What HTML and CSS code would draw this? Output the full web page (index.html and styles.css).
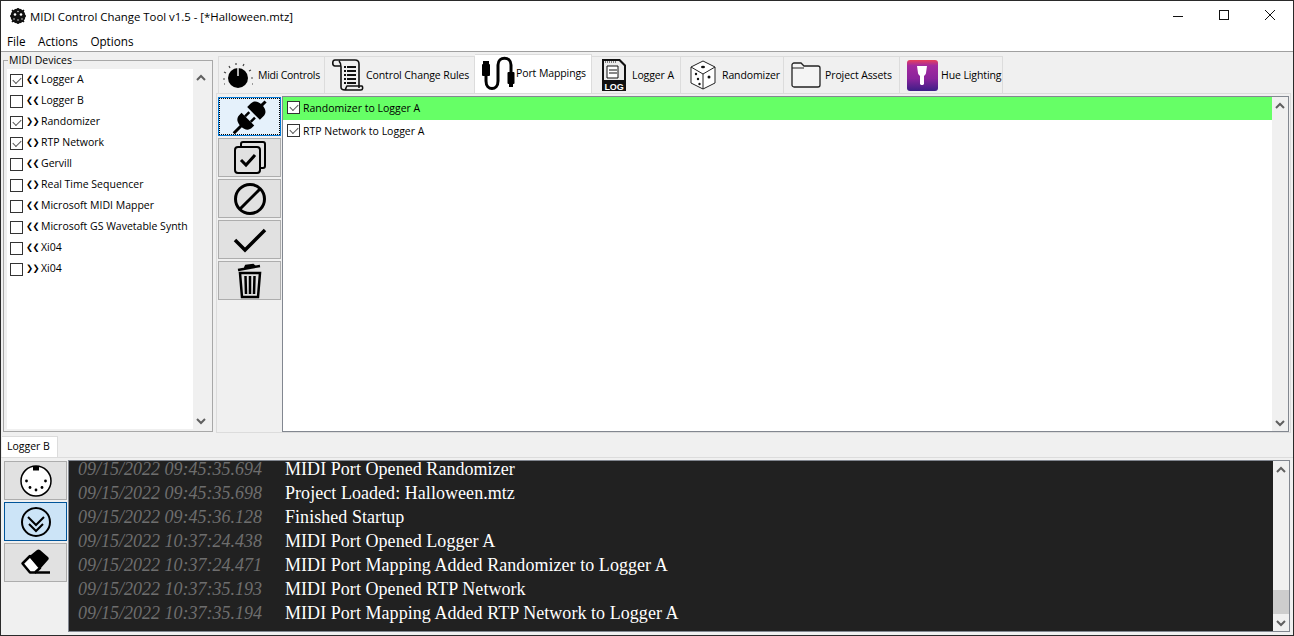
FILE: index.html
```html
<!DOCTYPE html>
<html lang="en">
<head>
<meta charset="utf-8">
<title>MIDI Control Change Tool</title>
<link rel="stylesheet" href="styles.css">
</head>
<body>
<div class="window">
  <header class="titlebar">
    <svg class="app-icon" width="18" height="18" viewBox="0 0 18 18"><circle cx="9" cy="9" r="7.5" fill="#111"/><path d="M1 9h16M9 1v16M3 3l12 12M15 3L3 15" stroke="#111" stroke-width="1.6"/><g fill="#fff"><circle cx="6" cy="7.5" r="1.3"/><circle cx="12" cy="7.5" r="1.3"/><circle cx="9" cy="4.5" r=".7"/><circle cx="5" cy="12" r=".7"/><circle cx="9" cy="13" r=".7"/><circle cx="13" cy="12" r=".7"/></g></svg>
    <span class="title-text">MIDI Control Change Tool v1.5 - [*Halloween.mtz]</span>
    <div class="window-controls">
      <svg width="46" height="30" viewBox="0 0 46 30"><path d="M18 15.5h10" stroke="#111"/></svg>
      <svg width="46" height="30" viewBox="0 0 46 30"><rect x="18.5" y="9.5" width="9" height="9" fill="none" stroke="#111"/></svg>
      <svg width="46" height="30" viewBox="0 0 46 30"><path d="M18 9l10 10M28 9L18 19" stroke="#111"/></svg>
    </div>
  </header>
  <nav class="menubar"><span>File</span><span>Actions</span><span>Options</span></nav>

  <main class="upper">
    <fieldset class="devices">
      <legend>MIDI Devices</legend>
      <div class="devices-inner">
        <ul class="device-list">
          <li><i class="check on"></i><b class="dir">&#10094;&#10094;</b>Logger A</li>
          <li><i class="check"></i><b class="dir">&#10094;&#10094;</b>Logger B</li>
          <li><i class="check on"></i><b class="dir">&#10095;&#10095;</b>Randomizer</li>
          <li><i class="check on"></i><b class="dir">&#10094;&#10095;</b>RTP Network</li>
          <li><i class="check"></i><b class="dir">&#10094;&#10094;</b>Gervill</li>
          <li><i class="check"></i><b class="dir">&#10094;&#10095;</b>Real Time Sequencer</li>
          <li><i class="check"></i><b class="dir">&#10094;&#10094;</b>Microsoft MIDI Mapper</li>
          <li><i class="check"></i><b class="dir">&#10094;&#10094;</b>Microsoft GS Wavetable Synth</li>
          <li><i class="check"></i><b class="dir">&#10094;&#10094;</b>Xi04</li>
          <li><i class="check"></i><b class="dir">&#10095;&#10095;</b>Xi04</li>
        </ul>
        <div class="scrollbar">
          <svg class="arrow" width="16" height="17" viewBox="0 0 16 17"><path d="M4 11l4-4 4 4" fill="none" stroke="#606060" stroke-width="2"/></svg>
          <div class="track"></div>
          <svg class="arrow" width="16" height="17" viewBox="0 0 16 17"><path d="M4 7l4 4 4-4" fill="none" stroke="#606060" stroke-width="2"/></svg>
        </div>
      </div>
    </fieldset>

    <section class="workspace">
      <div class="tabs">
        <div class="tab t-midi">
          <svg width="36" height="30" viewBox="0 0 36 30"><circle cx="17" cy="18" r="10" fill="#000"/><path d="M17 8v8" stroke="#fff" stroke-width="1.4"/><g stroke="#444" stroke-width="1.2" fill="none"><path d="M2 19h2M3 12l2 1M8 6l1 2M15 3v2M23 4l-1 2M30 10l-2 1M32 18h-2M3 24h1M32 24h-1"/></g></svg>
          <span>Midi Controls</span>
        </div>
        <div class="tab t-rules">
          <svg width="34" height="34" viewBox="0 0 34 34"><path d="M4 2h20c3 0 4 2 4 4v24M4 2C1 2 1 8 4 8h6M8 3c2 2 2 4 2 6v20c0 2 2 3 4 3h16c2 0 2-3 1-4H16c-1 1-1 3-2 4" fill="none" stroke="#111" stroke-width="1.6"/><path d="M13 9h12M13 13h12M13 17h12M13 21h12M13 25h12" stroke="#111" stroke-width="2" stroke-dasharray="2 1 9 0"/></svg>
          <span>Control Change Rules</span>
        </div>
        <div class="tab t-ports active">
          <svg width="36" height="36" viewBox="0 0 36 36"><path d="M7 17v9c0 10 12 10 12 0V10c0-9 13-9 13 0v12" fill="none" stroke="#000" stroke-width="3"/><rect x="4" y="6" width="6" height="3" fill="#000"/><rect x="3" y="9" width="8" height="12" rx="1" fill="#000"/><rect x="28.500" y="17" width="7" height="12" rx="1" fill="#000"/><rect x="30" y="29" width="4" height="3" fill="#000"/></svg>
          <span>Port Mappings</span>
        </div>
        <div class="tab t-logger">
          <svg width="26" height="34" viewBox="0 0 26 34"><path d="M2 1h17l6 6v26H1V1z" fill="#111"/><path d="M3 3h15l5 5v14H3z" fill="#ececec"/><path d="M6 8h11v12H6z" fill="#fff" stroke="#111"/><path d="M8 12h8M8 15h8" stroke="#111"/><path d="M4 4h12" stroke="#111" stroke-dasharray="1 1"/><text x="13" y="31.500" class="log-text" text-anchor="middle">LOG</text></svg>
          <span>Logger A</span>
        </div>
        <div class="tab t-random">
          <svg width="26" height="30" viewBox="0 0 26 30"><path d="M13 1l12 6v16l-12 6-12-6V7z" fill="#fff" stroke="#222"/><path d="M1 7l12 7 12-7M13 14v15" fill="none" stroke="#222"/><g fill="#111"><ellipse cx="13" cy="7" rx="2" ry="1.300"/><circle cx="6" cy="14" r="1.200"/><circle cx="8" cy="19" r="1.200"/><circle cx="9.500" cy="24" r="1.200"/><circle cx="19" cy="17" r="1.500"/></g></svg>
          <span>Randomizer</span>
        </div>
        <div class="tab t-assets">
          <svg width="30" height="26" viewBox="0 0 30 26"><path d="M1 3c0-1 1-2 2-2h7l3 3h14c1 0 2 1 2 2v17c0 1-1 2-2 2H3c-1 0-2-1-2-2z" fill="#f4f4f4" stroke="#222" stroke-width="1.300"/><path d="M1 6h12" stroke="#222"/></svg>
          <span>Project Assets</span>
        </div>
        <div class="tab t-hue">
          <svg width="31" height="31" viewBox="0 0 31 31"><defs><linearGradient id="hue" x1="0" y1="0" x2="0" y2="1"><stop offset="0" stop-color="#e8405a"/><stop offset=".18" stop-color="#a42a9e"/><stop offset=".6" stop-color="#8a249c"/><stop offset="1" stop-color="#3c1e86"/></linearGradient></defs><rect width="31" height="31" rx="3" fill="url(#hue)"/><path d="M10 6h10l-1 7c0 1-1 2-2 3v8l-1 1h-2l-1-1v-8c-1-1-2-2-2-3z" fill="#fff"/></svg>
          <span>Hue Lighting</span>
        </div>
      </div>
      <div class="tab-pane">
        <div class="toolbar">
          <button class="tool focused"><svg class="bleed" width="36" height="36" viewBox="0 0 36 36"><g transform="rotate(45 18 18)" fill="#000" stroke="#000" stroke-width="0"><path d="M18 -4v7" stroke-width="3"/><path d="M9 13h18V8c0-5-4-7-9-7s-9 2-9 7z"/><path d="M9 21h18v3c0 5-4 7-9 7s-9-2-9-7z"/><path d="M14 21v-6M22 21v-6" stroke-width="2.500"/><path d="M18 30v11" stroke-width="3"/></g></svg></button>
          <button class="tool"><svg width="34" height="34" viewBox="0 0 34 34"><path d="M8 5V3c0-1 1-2 2-2h20c1 0 2 1 2 2v22c0 1-1 2-2 2h-2" fill="none" stroke="#000" stroke-width="2"/><rect x="2" y="6" width="25" height="26" rx="3" fill="none" stroke="#000" stroke-width="2"/><path d="M8 19l5 5 9-10" fill="none" stroke="#000" stroke-width="3"/></svg></button>
          <button class="tool"><svg width="34" height="34" viewBox="0 0 34 34"><circle cx="17" cy="17" r="14.500" fill="none" stroke="#000" stroke-width="3"/><path d="M7 27L27 7" stroke="#000" stroke-width="3"/></svg></button>
          <button class="tool"><svg width="34" height="26" viewBox="0 0 34 26"><path d="M2 13l10 10L32 3" fill="none" stroke="#000" stroke-width="3.500"/></svg></button>
          <button class="tool"><svg width="26" height="36" viewBox="0 0 26 36"><path d="M1 7l22-4M8 5l1-2 7-1 2 2" fill="none" stroke="#000" stroke-width="2.500"/><path d="M3 10h20l-2 24H5z" fill="none" stroke="#000" stroke-width="2.500"/><path d="M8.500 13l.5 18M13 13v18M17.500 13l-.5 18" stroke="#000" stroke-width="2.500"/></svg></button>
        </div>
        <div class="mappings">
          <ul class="mapping-list">
            <li class="selected"><i class="check on"></i>Randomizer to Logger A</li>
            <li><i class="check on"></i>RTP Network to Logger A</li>
          </ul>
          <div class="scrollbar">
            <svg class="arrow" width="16" height="17" viewBox="0 0 16 17"><path d="M4 11l4-4 4 4" fill="none" stroke="#606060" stroke-width="2"/></svg>
            <div class="track"></div>
            <svg class="arrow" width="16" height="17" viewBox="0 0 16 17"><path d="M4 7l4 4 4-4" fill="none" stroke="#606060" stroke-width="2"/></svg>
          </div>
        </div>
      </div>
    </section>
  </main>

  <section class="lower">
    <div class="log-tabs"><div class="log-tab">Logger B</div></div>
    <div class="log-pane">
      <div class="log-tools">
        <button class="tool"><svg width="32" height="32" viewBox="0 0 32 32"><circle cx="16" cy="16" r="15" fill="#fff" stroke="#000" stroke-width="1.500"/><rect x="13" y="1" width="6" height="4.500" fill="#000"/><g fill="#000"><circle cx="6.500" cy="16" r="1.400"/><circle cx="25.500" cy="16" r="1.400"/><circle cx="10" cy="22.500" r="1.400"/><circle cx="22" cy="22.500" r="1.400"/><circle cx="16" cy="25" r="1.400"/></g></svg></button>
        <button class="tool toggled"><svg width="32" height="32" viewBox="0 0 32 32"><circle cx="16" cy="16" r="14" fill="none" stroke="#000" stroke-width="2"/><path d="M8 11l8 8 8-8M9 18l7 7 7-7" fill="none" stroke="#000" stroke-width="2"/></svg></button>
        <button class="tool"><svg width="32" height="28" viewBox="0 0 32 28"><path d="M10 7L2.500 14.500 10 23.500h5L20 19z" fill="#fff" stroke="#000" stroke-width="2.500" stroke-linejoin="round"/><path d="M9 7.500L17 1c1-.7 2-.7 3 0l8 7c1 1 1 2 0 3l-7.500 8.500z" fill="#000"/><path d="M15 23.500h15" stroke="#000" stroke-width="2.500"/></svg></button>
      </div>
      <div class="log-box">
        <div class="log-lines">
          <div class="line"><time>09/15/2022 09:45:35.694</time><span>MIDI Port Opened Randomizer</span></div>
          <div class="line"><time>09/15/2022 09:45:35.698</time><span>Project Loaded: Halloween.mtz</span></div>
          <div class="line"><time>09/15/2022 09:45:36.128</time><span>Finished Startup</span></div>
          <div class="line"><time>09/15/2022 10:37:24.438</time><span>MIDI Port Opened Logger A</span></div>
          <div class="line"><time>09/15/2022 10:37:24.471</time><span>MIDI Port Mapping Added Randomizer to Logger A</span></div>
          <div class="line"><time>09/15/2022 10:37:35.193</time><span>MIDI Port Opened RTP Network</span></div>
          <div class="line"><time>09/15/2022 10:37:35.194</time><span>MIDI Port Mapping Added RTP Network to Logger A</span></div>
        </div>
        <div class="scrollbar">
          <svg class="arrow" width="16" height="17" viewBox="0 0 16 17"><path d="M4 11l4-4 4 4" fill="none" stroke="#606060" stroke-width="2"/></svg>
          <div class="track end"><div class="thumb"></div></div>
          <svg class="arrow" width="16" height="17" viewBox="0 0 16 17"><path d="M4 7l4 4 4-4" fill="none" stroke="#606060" stroke-width="2"/></svg>
        </div>
      </div>
    </div>
  </section>
</div>
</body>
</html>
```
FILE: styles.css
```css
* { box-sizing: border-box; }
html, body { margin: 0; padding: 0; height: 100%; overflow: hidden; }
body { font-family: "Open Sans", "Noto Sans", sans-serif; font-size: 10.5px; color: #000; background: #f0f0f0; }
ul { list-style: none; margin: 0; padding: 0; }

.window { width: 1294px; height: 636px; border: 1px solid #2a2a2a; display: flex; flex-direction: column; background: #f0f0f0; }

.titlebar { height: 30px; background: #fff; display: flex; align-items: center; padding-left: 8px; flex: none; }
.app-icon { margin-right: 3px; }
.title-text { font-size: 11.4px; }
.window-controls { margin-left: auto; display: flex; }
.window-controls svg { display: block; }

.menubar { height: 21px; background: #fff; border-bottom: 1px solid #a0a0a0; display: flex; gap: 12.5px; padding: 2px 0 0 6px; font-size: 11.7px; flex: none; }

.upper { flex: none; height: 382px; display: flex; padding: 1px 0 0 2px; }

.devices { width: 210px; height: 378px; margin: 1px 0 0 0; padding: 0 3px 2px 3px; border: 1px solid #a8a8a8; min-width: 0; }
.devices legend { padding: 0 1px; margin-left: 1px; line-height: 13px; }
.devices-inner { display: flex; height: calc(100% - 2px); margin-top: 2px; }
.device-list { width: 186px; background: #fff; flex: none; }
.device-list li { height: 21px; display: flex; align-items: center; padding: 0 0 1px 3px; white-space: nowrap; }
.device-list .check { top: 1px; }
.check { width: 13px; height: 13px; border: 1px solid #333; background: #fff; display: block; margin-right: 5px; flex: none; position: relative; }
.check.on::after { content: ""; position: absolute; left: 2px; top: 1px; width: 7px; height: 4px; border-left: 1.5px solid #555; border-bottom: 1.5px solid #555; transform: translateY(1px) rotate(-45deg); }
.dir { font-family: "DejaVu Sans", sans-serif; font-weight: normal; font-size: 8.5px; width: 15px; margin-left: -2px; flex: none; letter-spacing: -0.5px; }

.scrollbar { width: 16px; flex: none; display: flex; flex-direction: column; background: #f0f0f0; }
.arrow { display: block; flex: none; }
.track { flex: 1; display: flex; flex-direction: column; justify-content: flex-end; }
.thumb { height: 24px; background: #cdcdcd; }

.workspace { flex: 1; display: flex; flex-direction: column; padding-left: 3px; min-width: 0; }
.tabs { display: flex; height: 40px; align-items: flex-end; padding-left: 2px; flex: none; }
.tab { height: 37px; border: 1px solid #dcdcdc; border-left: 0; border-bottom: 0; display: flex; align-items: center; background: #f0f0f0; flex: none; white-space: nowrap; letter-spacing: -0.1px; }
.tab:first-child { border-left: 1px solid #dcdcdc; }
.tab svg { flex: none; display: block; }
.tab span { display: block; }
.t-midi { width: 107px; padding-left: 2px; gap: 1px; letter-spacing: -0.25px; }
.t-rules { width: 150px; padding-left: 6px; gap: 1px; }
.t-ports { width: 117px; height: 39px; background: #fff; padding: 0 0 3px 4px; gap: 1px; }
.t-logger { width: 89px; padding-left: 9px; gap: 5px; }
.t-random { width: 103px; padding-left: 9px; gap: 6px; }
.t-assets { width: 116px; padding-left: 7px; gap: 4px; }
.t-hue { width: 103px; padding-left: 7px; gap: 3px; }
.log-text { font-family: "Liberation Sans", sans-serif; font-weight: bold; font-size: 9px; fill: #fff; }

.tab-pane { flex: 1; border: 1px solid #dcdcdc; display: flex; background: #f0f0f0; width: 1075px; margin-bottom: 1px; }
.toolbar { width: 65px; padding: 3px 0 0 1px; display: flex; flex-direction: column; gap: 2px; flex: none; }
.tool { width: 63px; height: 39px; padding: 0; background: #e1e1e1; border: 1px solid #adadad; display: flex; align-items: center; justify-content: center; flex: none; }
.tool.focused { background: #e5f1fb; border: 1px solid #0078d7; outline: 1px dotted #000; outline-offset: -2px; }
.tool.toggled { background: #cce4f7; border-color: #005499; }
.bleed { overflow: visible; }
.mappings { flex: 1; display: flex; border: 1px solid #828790; min-width: 0; background: #fff; margin: 2px 1px 0 0; }
.mapping-list { flex: 1; background: #fff; }
.mapping-list li { height: 23px; display: flex; align-items: center; padding: 0 0 2px 4px; }
.mapping-list .check { margin-right: 3px; }
.mapping-list li.selected { background: #66ff66; }

.lower { flex: 1; display: flex; flex-direction: column; min-height: 0; }
.log-tabs { height: 24px; display: flex; align-items: flex-end; padding-left: 1px; flex: none; border-bottom: 1px solid #dcdcdc; }
.log-tab { width: 56px; height: 21px; background: #fff; border: 1px solid #dcdcdc; border-bottom: 0; border-left: 0; display: flex; align-items: center; padding: 0 0 2px 5px; }
.log-pane { flex: 1; display: flex; padding: 2px 3px 3px 3px; min-height: 0; }
.log-tools { width: 64px; display: flex; flex-direction: column; gap: 2px; padding-top: 1px; flex: none; }
.log-box { flex: 1; display: flex; border: 1px solid #828790; min-width: 0; background: #f0f0f0; }
.log-lines { flex: 1; background: #212121; padding: 0 0 0 9px; }
.line { height: 24px; display: flex; font-family: "Liberation Serif", serif; font-size: 18px; line-height: 16px; color: #fff; white-space: nowrap; }
.line span { letter-spacing: 0.05px; }
.line time { width: 207px; flex: none; font-style: italic; color: #6e6e6e; }
```
